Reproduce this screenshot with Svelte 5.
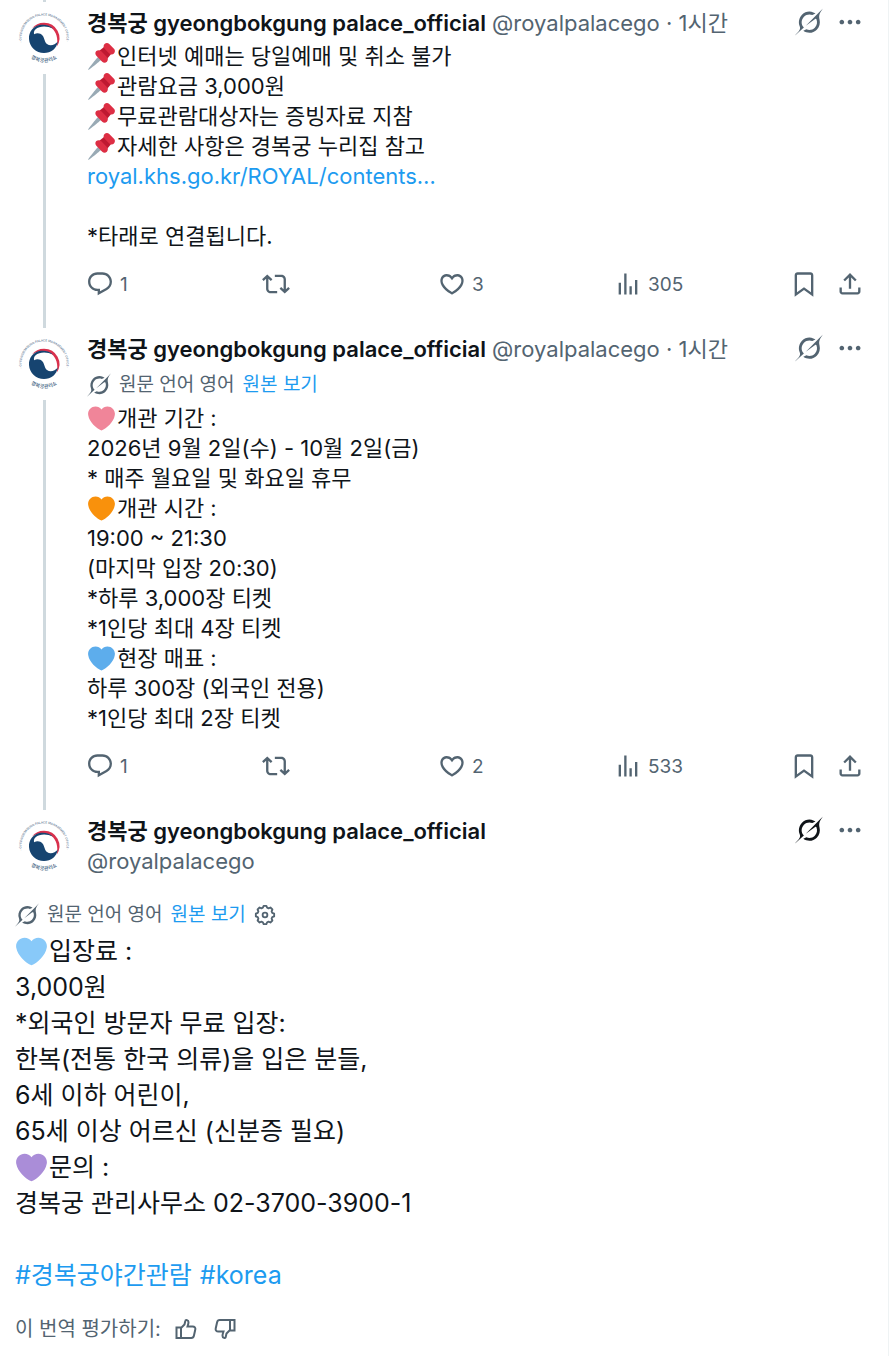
<script>
  const icons = {
    reply: 'M1.751 10c0-4.42 3.584-8 8.005-8h4.366c4.49 0 8.129 3.64 8.129 8.13 0 2.96-1.607 5.68-4.196 7.11l-8.054 4.46v-3.69h-.067c-4.49.1-8.183-3.51-8.183-8.01zm8.005-6c-3.317 0-6.005 2.69-6.005 6 0 3.37 2.77 6.08 6.138 6.01l.351-.01h1.761v2.3l5.087-2.81c1.951-1.08 3.163-3.13 3.163-5.36 0-3.39-2.744-6.13-6.129-6.13H9.756z',
    repost: 'M4.5 3.88l4.432 4.14-1.364 1.46L5.5 7.55V16c0 1.1.896 2 2 2H13v2H7.5c-2.209 0-4-1.79-4-4V7.55L1.432 9.48.068 8.02 4.5 3.88zM16.5 6H11V4h5.5c2.209 0 4 1.79 4 4v8.45l2.068-1.93 1.364 1.46-4.432 4.14-4.432-4.14 1.364-1.46 2.068 1.93V8c0-1.1-.896-2-2-2z',
    like: 'M16.697 5.5c-1.222-.06-2.679.51-3.89 2.16l-.805 1.09-.806-1.09C9.984 6.01 8.526 5.44 7.304 5.5c-1.243.07-2.349.78-2.91 1.91-.552 1.12-.633 2.78.479 4.82 1.074 1.97 3.257 4.27 7.129 6.61 3.87-2.34 6.052-4.64 7.126-6.61 1.111-2.04 1.03-3.7.477-4.82-.561-1.13-1.666-1.84-2.908-1.91zm4.187 7.69c-1.351 2.48-4.001 5.12-8.379 7.67l-.503.3-.504-.3c-4.379-2.55-7.029-5.19-8.382-7.67-1.36-2.5-1.41-4.86-.514-6.67.887-1.79 2.647-2.91 4.601-3.01 1.651-.09 3.368.56 4.798 2.01 1.429-1.45 3.146-2.1 4.796-2.01 1.954.1 3.714 1.22 4.601 3.01.896 1.81.846 4.17-.514 6.67z',
    views: 'M8.75 21V3h2v18h-2zM18 21V8.5h2V21h-2zM4 21l.004-10h2L6 21H4zm9.248 0v-7h2v7h-2z',
    bookmark: 'M4 4.5C4 3.12 5.119 2 6.5 2h11C18.881 2 20 3.12 20 4.5v18.44l-8-5.71-8 5.71V4.5zM6.5 4c-.276 0-.5.22-.5.5v14.56l6-4.29 6 4.29V4.5c0-.28-.224-.5-.5-.5h-11z',
    share: 'M12 2.59l5.7 5.7-1.41 1.42L13 6.41V16h-2V6.41l-3.3 3.3-1.41-1.42L12 2.59zM21 15l-.02 3.51c0 1.38-1.12 2.49-2.5 2.49H5.5C4.11 21 3 19.88 3 18.5V15h2v3.5c0 .28.22.5.5.5h12.98c.28 0 .5-.22.5-.5L19 15h2z',
    more: 'M3 12c0-1.1.9-2 2-2s2 .9 2 2-.9 2-2 2-2-.9-2-2zm9 2c1.1 0 2-.9 2-2s-.9-2-2-2-2 .9-2 2 .9 2 2 2zm7 0c1.1 0 2-.9 2-2s-.9-2-2-2-2 .9-2 2 .9 2 2 2z'
  };
  const grokPath = 'M12.745 20.54l10.97-8.19c.539-.4 1.307-.244 1.564.38 1.349 3.288.746 7.241-1.938 9.955-2.683 2.714-6.417 3.31-9.83 1.954l-3.728 1.745c5.347 3.697 11.84 2.782 15.898-1.324 3.219-3.255 4.216-7.692 3.284-11.693l.008.009c-1.351-5.878.332-8.227 3.782-13.031L33 0l-4.54 4.59v-.014L12.743 20.544m-2.263 1.987c-3.837-3.707-3.175-9.446.1-12.755 2.42-2.449 6.388-3.448 9.852-1.979l3.72-1.737c-.67-.49-1.53-1.017-2.515-1.387-4.455-1.854-9.789-.931-13.41 2.728-3.483 3.523-4.579 8.94-2.697 13.561 1.405 3.454-.899 5.898-3.22 8.364C1.49 30.2.666 31.074 0 32l10.478-9.466';
  const thumbPath = 'M1.5 9.5H6V20H1.500zM6 10l3.500-3.500L10.300 3C10.600 1.500 13.500 1.700 13.500 4.300c0 1.200-.4 2.500-1 4.200h5.200c1.900 0 3 1.300 2.600 3l-1.400 6.300c-.3 1.400-1.200 2.200-2.600 2.200H6';

  const name = '경복궁 gyeongbokgung palace_official';
  const handle = '@royalpalacego';

  const posts = [
    {
      id: 'a',
      translated: false,
      lines: [
        { pin: true, text: '인터넷 예매는 당일예매 및 취소 불가' },
        { pin: true, text: '관람요금 3,000원' },
        { pin: true, text: '무료관람대상자는 증빙자료 지참' },
        { pin: true, text: '자세한 사항은 경복궁 누리집 참고' },
        { links: ['royal.khs.go.kr/ROYAL/contents…'] },
        { text: '' },
        { text: '*타래로 연결됩니다.' }
      ],
      replies: 1, likes: 3, views: 305
    },
    {
      id: 'b',
      translated: true,
      lines: [
        { heart: '#f08599', text: '개관 기간 :' },
        { text: '2026년 9월 2일(수) - 10월 2일(금)' },
        { text: '* 매주 월요일 및 화요일 휴무' },
        { heart: '#f9910c', text: '개관 시간 :' },
        { text: '19:00 ~ 21:30' },
        { text: '(마지막 입장 20:30)' },
        { text: '*하루 3,000장 티켓' },
        { text: '*1인당 최대 4장 티켓' },
        { heart: '#5dadec', text: '현장 매표 :' },
        { text: '하루 300장 (외국인 전용)' },
        { text: '*1인당 최대 2장 티켓' }
      ],
      replies: 1, likes: 2, views: 533
    }
  ];

  const mainLines = [
    { heart: '#88c9f9', text: '입장료 :' },
    { text: '3,000원' },
    { text: '*외국인 방문자 무료 입장:' },
    { text: '한복(전통 한국 의류)을 입은 분들,' },
    { text: '6세 이하 어린이,' },
    { text: '65세 이상 어르신 (신분증 필요)' },
    { heart: '#aa8dd8', text: '문의 :' },
    { text: '경복궁 관리사무소 02-3700-3900-1' },
    { text: '' },
    { links: ['#경복궁야간관람', '#korea'] }
  ];
</script>

{#snippet icon(path)}
  <svg class="icon" viewBox="0 0 24 24" aria-hidden="true"><path d={path} /></svg>
{/snippet}

{#snippet grok()}
  <svg class="grok" viewBox="0 0 33 32" aria-hidden="true"><path d={grokPath} /></svg>
{/snippet}

{#snippet avatar(id)}
  <a class="avatar" href="#profile" aria-label={name}>
    <svg viewBox="0 0 60 60">
      <defs>
        <path id="top-{id}" d="M11 43.5A22.500 22.500 0 1 1 47 43.5" />
        <path id="bottom-{id}" d="M10 45A24.500 24.500 0 0 0 48 45" />
      </defs>
      <circle cx="29.5" cy="30" r="29" fill="#fff" />
      <path fill="#d9304c" d="M17 20.500C20 16.500 24 14.700 29 14.700A15.300 15.300 0 0 1 41.800 38.500C43.300 30.500 41.500 24 36.500 20C31.500 16.300 23 16.500 17 20.500Z" />
      <path fill="#164470" d="M14 31C13.500 24 18.500 17.700 26 16.800C31 16.300 35.300 17.800 38 20.500C32 17.600 24.500 17.600 20.600 21.300C18.800 23 18.500 25.200 19.300 26.300C21.500 24.800 25.500 25 27.500 27.500C29.700 30.300 29.500 34 32 36C35 38.300 40 37.300 42.800 33.500C41.800 40.500 36 45 29 45C21 45 14.500 39 14 31Z" />
      <text class="ring"><textPath href="#top-{id}" startOffset="50%" text-anchor="middle">· GYEONGBOKGUNG PALACE MANAGEMENT OFFICE ·</textPath></text>
      <text class="ring-ko"><textPath href="#bottom-{id}" startOffset="50%" text-anchor="middle">경복궁관리소</textPath></text>
    </svg>
  </a>
{/snippet}

{#snippet tools()}
  <div class="tools">
    <button aria-label="Grok">{@render grok()}</button>
    <button aria-label="더 보기">{@render icon(icons.more)}</button>
  </div>
{/snippet}

{#snippet translation(settings)}
  <div class="translation">
    {@render grok()}
    <span>원문 언어 영어</span>
    <a href="#original">원본 보기</a>
    {#if settings}
      <button aria-label="번역 설정">
        <svg class="small" viewBox="0 0 24 24" fill="none" stroke="currentColor" stroke-width="2" stroke-linejoin="round">
          <path d="M9.700 4L10.500 2h3l.8 2 1.600.7 2-.9 2.200 2.200-.9 2 .7 1.600 2.100.9v3l-2.100.9-.7 1.600.9 2-2.200 2.200-2-.9-1.600.7-.8 2h-3l-.8-2-1.600-.7-2 .9-2.200-2.200.9-2-.7-1.600-2.100-.9v-3l2.100-.9.7-1.600-.9-2 2.200-2.200 2 .9z" />
          <circle cx="12" cy="12" r="2.600" />
        </svg>
      </button>
    {/if}
  </div>
{/snippet}

{#snippet body(lines)}
  {#each lines as line}
    <p>
      {#if line.pin}
        <svg class="emoji" viewBox="0 0 36 36" role="img" aria-label="📌">
          <path fill="#be1931" d="M23.651 23.297L12.702 12.348l9.386-7.821 9.385 9.385z" />
          <path fill="#dd2e44" d="M34.600 13.912c-1.727 1.729-4.528 1.729-6.255 0l-6.257-6.256c-1.729-1.727-1.729-4.530 0-6.258 1.726-1.727 4.528-1.727 6.257 0L34.600 7.656c1.728 1.727 1.728 4.529 0 6.256z" />
          <path fill="#99aab5" d="M14 17.823S-.593 35.029.188 35.813C.970 36.596 18.177 22 18.177 22L14 17.823z" />
          <path fill="#dd2e44" d="M25.190 24.877c-1.727 1.729-4.528 1.729-6.256 0l-7.822-7.822c-1.728-1.727-1.728-4.528 0-6.256 1.728-1.727 4.530-1.727 6.258 0l7.820 7.822c1.728 1.727 1.728 4.529 0 6.256z" />
        </svg>
      {:else if line.heart}
        <svg class="emoji" viewBox="0 0 36 36" aria-hidden="true">
          <path fill={line.heart} d="M35.885 11.833c0-5.450-4.418-9.868-9.867-9.868-3.308 0-6.227 1.633-8.018 4.129-1.791-2.496-4.710-4.129-8.017-4.129-5.450 0-9.868 4.417-9.868 9.868 0 .772.098 1.520.266 2.241C1.751 22.587 11.216 31.568 18 34.034c6.783-2.466 16.249-11.447 17.617-19.959.170-.721.268-1.469.268-2.242z" />
        </svg>
      {/if}
      {#if line.links}
        <span class="links">{#each line.links as link}<a href="#link">{link}</a>{/each}</span>
      {:else}
        <span>{line.text}</span>
      {/if}
    </p>
  {/each}
{/snippet}

<main>
  <div class="stub"></div>
  {#each posts as post (post.id)}
    <article class="post">
      <div class="rail">
        {@render avatar(post.id)}
        <div class="line"></div>
      </div>
      <div class="content">
        <header>
          <div class="who"><a class="name" href="#profile">{name}</a> <span class="muted">{handle} · 1시간</span></div>
          {@render tools()}
        </header>
        {#if post.translated}{@render translation(false)}{/if}
        <div class="body">{@render body(post.lines)}</div>
        <div class="actions">
          <button aria-label="답글">{@render icon(icons.reply)}<span>{post.replies}</span></button>
          <button aria-label="재게시">{@render icon(icons.repost)}</button>
          <button aria-label="마음에 들어요">{@render icon(icons.like)}<span>{post.likes}</span></button>
          <button aria-label="조회수">{@render icon(icons.views)}<span>{post.views}</span></button>
          <div class="pair">
            <button aria-label="북마크">{@render icon(icons.bookmark)}</button>
            <button aria-label="공유하기">{@render icon(icons.share)}</button>
          </div>
        </div>
      </div>
    </article>
  {/each}

  <article class="focus">
    <div class="post">
      <div class="rail">{@render avatar('c')}</div>
      <div class="content">
        <header class="dark">
          <div class="who"><a class="name" href="#profile">{name}</a></div>
          {@render tools()}
        </header>
        <div class="muted handle">{handle}</div>
      </div>
    </div>
    {@render translation(true)}
    <div class="body large">{@render body(mainLines)}</div>
    <div class="rate">
      <span>이 번역 평가하기:</span>
      <button aria-label="좋은 번역">
        <svg class="small" viewBox="0 0 22 22" fill="none" stroke="currentColor" stroke-width="2"><path d={thumbPath} /></svg>
      </button>
      <button aria-label="나쁜 번역">
        <svg class="small flip" viewBox="0 0 22 22" fill="none" stroke="currentColor" stroke-width="2"><path d={thumbPath} /></svg>
      </button>
    </div>
  </article>
</main>

<style>
  :global(body) {
    margin: 0;
    background: #fff;
  }
  main {
    box-sizing: border-box;
    min-height: 100vh;
    padding: 0 24px 8px 15px;
    border-right: 1px solid #eff3f4;
    color: #0f1419;
    font: 22px/30px Inter, 'Noto Sans CJK KR', sans-serif;
  }
  a {
    color: #1d9bf0;
    text-decoration: none;
  }
  p {
    margin: 0;
  }
  button {
    display: flex;
    align-items: center;
    padding: 0;
    border: 0;
    background: none;
    color: inherit;
    font: inherit;
    cursor: pointer;
  }
  svg {
    display: block;
    flex: none;
  }
  .stub,
  .line {
    width: 3px;
    margin-left: 28px;
    background: #cfd9de;
  }
  .stub {
    height: 2px;
  }
  .post {
    display: flex;
    gap: 12px;
  }
  .rail {
    display: flex;
    flex-direction: column;
    gap: 6px;
    width: 60px;
    padding-top: 6px;
  }
  .line {
    flex: 1;
  }
  .avatar svg {
    width: 60px;
    height: 60px;
    overflow: visible;
  }
  .ring,
  .ring-ko {
    fill: #5b7590;
    font-family: Inter, 'Noto Sans CJK KR', sans-serif;
    font-weight: 500;
  }
  .ring {
    font-size: 3px;
  }
  .ring-ko {
    fill: #2c4f73;
    font-size: 5px;
  }
  .content {
    flex: 1;
    min-width: 0;
    padding-top: 6px;
  }
  header {
    display: flex;
    justify-content: space-between;
    height: 33px;
  }
  .who {
    overflow: hidden;
    white-space: nowrap;
  }
  .name {
    color: #0f1419;
    font-weight: 600;
  }
  .muted,
  .tools,
  .translation,
  .actions,
  .rate {
    color: #536471;
  }
  .tools {
    display: flex;
    gap: 13px;
    height: 28px;
  }
  .dark .tools button:first-child {
    color: #0f1419;
  }
  .icon,
  .grok {
    width: 28px;
    height: 28px;
    fill: currentColor;
  }
  .small {
    width: 22px;
    height: 22px;
  }
  .flip {
    transform: rotate(180deg);
  }
  .handle {
    margin-top: -3px;
  }
  .translation {
    display: flex;
    align-items: center;
    gap: 8px;
    height: 36px;
    font-size: 19px;
  }
  .translation .grok {
    width: 24px;
    height: 24px;
  }
  .body p {
    display: flex;
    align-items: center;
    min-height: 30px;
  }
  .links {
    display: flex;
    gap: 8px;
  }
  .emoji {
    width: 27px;
    height: 27px;
    margin: 0 2px 0 1px;
  }
  .actions {
    display: grid;
    grid-template-columns: repeat(4, 1fr) auto;
    margin-left: -1px;
    padding: 18px 0 30px;
    font-size: 19px;
  }
  .actions button {
    gap: 6px;
    height: 29px;
  }
  .actions span {
    padding-top: 2px;
  }
  .pair {
    display: flex;
    gap: 18px;
  }
  .focus .translation {
    margin-top: 21px;
  }
  .large {
    font-size: 25px;
  }
  .large p {
    min-height: 36px;
  }
  .large .emoji {
    width: 31px;
    height: 31px;
  }
  .rate {
    display: flex;
    align-items: center;
    gap: 14px;
    height: 36px;
    margin-top: 18px;
    font-size: 20px;
  }
  .rate button + button {
    margin-left: 3px;
  }
</style>
